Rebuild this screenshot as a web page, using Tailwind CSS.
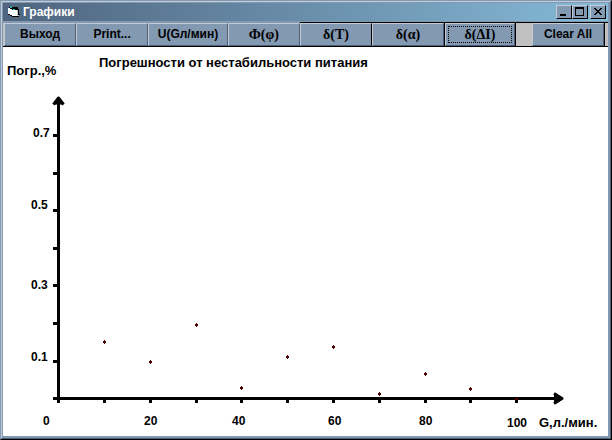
<!DOCTYPE html>
<html lang="ru">
<head>
    <meta charset="UTF-8">
    <meta name="viewport" content="width=device-width, initial-scale=1.0">
    <title>Графики</title>
    <script src="https://cdn.jsdelivr.net/npm/@tailwindcss/browser@4"></script>
</head>
<body class="min-h-screen flex flex-col bg-[#8399b1] border border-l-[#8399b1] border-t-[#8399b1] border-r-black border-b-black font-['Liberation_Sans',sans-serif] font-bold text-black">
    <div class="flex-1 flex flex-col border border-l-[#c1ccd8] border-t-[#c1ccd8] border-r-[#4c5f7b] border-b-[#4c5f7b] pl-px pt-px pr-[2px] pb-[2px]">
        <!-- Title bar -->
        <header class="h-[18px] flex items-center pl-1 pr-[2px] bg-linear-to-r from-[#4f657f] to-[#85bad8]">
            <svg class="w-4 h-4" viewBox="0 0 16 16" shape-rendering="crispEdges" aria-hidden="true">
                <path d="M2 3h9v2h1v5h1v1h-1v2H5v-1H3v-1H1V4h1z" fill="#000"/>
                <path d="M1 4h2v1h2v1h5v6H5v-1H3v-1H1z" fill="#fff"/>
                <path d="M3 3h2v1H3zM6 5h2v1H6z" fill="#00d8d8"/>
                <path d="M10 6h1v6h-1zM11 11h1v1h-1z" fill="#c0c0c0"/>
            </svg>
            <h1 class="text-[12px] leading-4 text-white">Графики</h1>
            <div class="ml-auto flex">
                <button type="button" aria-label="Свернуть" class="w-4 h-[14px] bg-[#8399b1] border border-t-[#c1ccd8] border-l-[#c1ccd8] border-r-black border-b-black">
                    <svg class="w-[14px] h-3" viewBox="0 0 14 12" shape-rendering="crispEdges"><path d="M3 8h6v2H3z"/></svg>
                </button>
                <button type="button" aria-label="Развернуть" class="w-4 h-[14px] bg-[#8399b1] border border-t-[#c1ccd8] border-l-[#c1ccd8] border-r-black border-b-black">
                    <svg class="w-[14px] h-3" viewBox="0 0 14 12" shape-rendering="crispEdges"><path fill-rule="evenodd" d="M2 1h9v9H2zM3 3v6h7V3z"/></svg>
                </button>
                <button type="button" aria-label="Закрыть" class="ml-[2px] w-4 h-[14px] bg-[#8399b1] border border-t-[#c1ccd8] border-l-[#c1ccd8] border-r-black border-b-black">
                    <svg class="w-[14px] h-3" viewBox="0 0 14 12" shape-rendering="crispEdges"><path d="M3 2h2v1h1v1h2v-1h1v-1h2v1h-1v1h-1v1h-1v1h1v1h1v1h1v1h-2v-1h-1v-1h-2v1h-1v1h-2v-1h1v-1h1v-1h1v-1h-1v-1h-1v-1h-1z"/></svg>
                </button>
            </div>
        </header>

        <!-- Toolbar -->
        <nav class="mt-[2px] h-6 flex pl-px bg-[#c0c0c0] border-b border-black text-[12px] leading-4">
            <button type="button" class="flex-[9] pb-[2px] bg-[#8399b1] border border-t-[#c1ccd8] border-l-[#c1ccd8] border-r-[#4c5f7b] border-b-[#4c5f7b]">Выход</button>
            <button type="button" class="flex-[9] pb-[2px] bg-[#8399b1] border border-t-[#c1ccd8] border-l-[#c1ccd8] border-r-[#4c5f7b] border-b-[#4c5f7b]">Print...</button>
            <button type="button" class="flex-[10] pb-[2px] bg-[#8399b1] border border-t-[#c1ccd8] border-l-[#c1ccd8] border-r-[#4c5f7b] border-b-[#4c5f7b]">U(Gл/мин)</button>
            <button type="button" class="flex-[9] bg-[#8399b1] border border-t-[#c1ccd8] border-l-[#c1ccd8] border-r-[#4c5f7b] border-b-[#4c5f7b] font-['Liberation_Serif',serif] text-[14px]">Ф(φ)</button>
            <button type="button" class="flex-[9] bg-[#8399b1] border border-t-[#c1ccd8] border-l-[#c1ccd8] border-r-black border-b-[#4c5f7b] shadow-[0_-1px_0_#000] font-['Liberation_Serif',serif] text-[14px]">δ(T)</button>
            <button type="button" class="flex-[9] bg-[#8399b1] border border-t-[#c1ccd8] border-l-[#c1ccd8] border-r-[#4c5f7b] border-b-[#4c5f7b] shadow-[0_-1px_0_#000] font-['Liberation_Serif',serif] text-[14px]">δ(α)</button>
            <button type="button" class="flex-[9] bg-[#8399b1] border-x border-black shadow-[0_-1px_0_#000] font-['Liberation_Serif',serif] text-[14px]">
                <span class="flex h-full p-[2px] border border-t-[#c1ccd8] border-l-[#c1ccd8] border-r-[#4c5f7b] border-b-[#4c5f7b]">
                    <span class="flex-1 flex items-center justify-center border border-dotted border-black">δ(ΔI)</span>
                </span>
            </button>
            <div class="w-4 shadow-[0_-1px_0_#000]"></div>
            <button type="button" class="flex-[9] pb-[2px] bg-[#8399b1] border border-t-[#c1ccd8] border-l-[#c1ccd8] border-r-[#4c5f7b] border-b-[#4c5f7b] shadow-[0_-1px_0_#000]">Clear All</button>
            <div class="w-1 border-l border-black shadow-[0_-1px_0_#000]"></div>
        </nav>

        <!-- Chart -->
        <main class="flex-1 bg-white">
            <svg class="block w-full h-auto" viewBox="3 47 605 389" role="img" aria-label="Погрешности от нестабильности питания">
                <g font-size="13" fill="#000">
                    <text x="99" y="67">Погрешности от нестабильности питания</text>
                    <text x="7" y="75">Погр.,%</text>
                    <text x="539" y="427">G,л./мин.</text>
                </g>
                <g font-size="12" fill="#000">
                    <text x="33" y="137">0.7</text>
                    <text x="31" y="209">0.5</text>
                    <text x="31" y="289">0.3</text>
                    <text x="31" y="361">0.1</text>
                    <text x="43" y="425">0</text>
                    <text x="144" y="425">20</text>
                    <text x="232" y="425">40</text>
                    <text x="328" y="425">60</text>
                    <text x="419" y="425">80</text>
                    <text x="507" y="427">100</text>
                </g>
                <g shape-rendering="crispEdges" fill="#000">
                    <path d="M57 98h3v303h-3zM53 397h508v3H53z"/>
                    <path d="M53 134h4v3h-4zM53 172h4v3h-4zM53 209h4v3h-4zM53 247h4v3h-4zM53 284h4v3h-4zM53 322h4v3h-4zM53 360h4v3h-4z"/>
                    <path d="M57 400h3v3h-3zM103 400h3v3h-3zM149 400h3v3h-3zM195 400h3v3h-3zM240 400h3v3h-3zM286 400h3v3h-3zM332 400h3v3h-3zM378 400h3v3h-3zM424 400h3v3h-3zM469 400h3v3h-3zM515 400h3v3h-3z"/>
                </g>
                <path d="M53.500 104.500l5-6.500 5 6.500M554 393.500l8 5-8 5" fill="#000" stroke="#000" stroke-width="3" stroke-linejoin="round"/>
                <!-- Measured points -->
                <path shape-rendering="crispEdges" fill="#500000" d="M103 341h3v2h-3zM104 340h1v4h-1zM149 361h3v2h-3zM150 360h1v4h-1zM195 324h3v2h-3zM196 323h1v4h-1zM240 387h3v2h-3zM241 386h1v4h-1zM286 356h3v2h-3zM287 355h1v4h-1zM332 346h3v2h-3zM333 345h1v4h-1zM378 393h3v2h-3zM379 392h1v4h-1zM424 373h3v2h-3zM425 372h1v4h-1zM469 388h3v2h-3zM470 387h1v4h-1zM515 398h3v2h-3z"/>
            </svg>
        </main>
    </div>
</body>
</html>
